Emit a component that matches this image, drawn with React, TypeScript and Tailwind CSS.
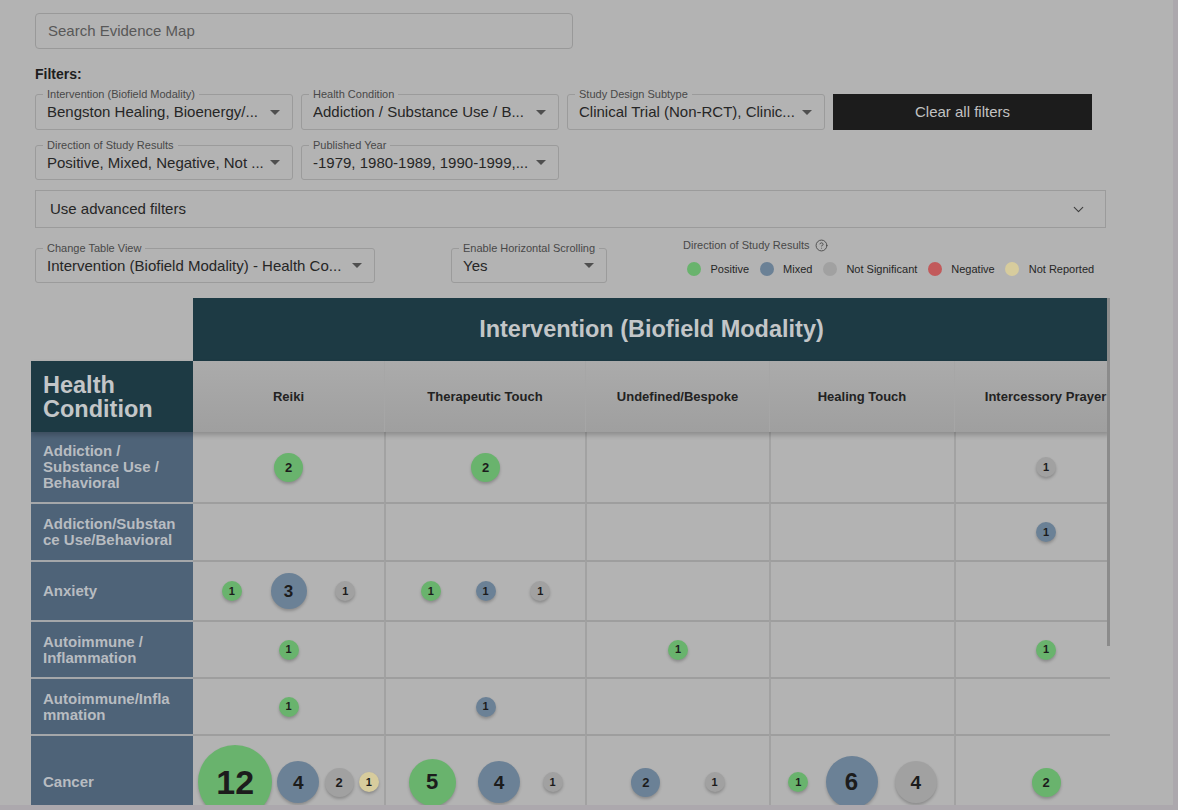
import React from "react";
import { ChevronDown, CircleHelp } from "lucide-react";

type Kind = "P" | "M" | "N" | "R";
const BUBBLE_BG: Record<Kind, string> = {
  P: "bg-[#69b36d]",
  M: "bg-[#6b8196]",
  N: "bg-[#a1a1a1]",
  R: "bg-[#d7cc9d]",
};

function Arrow() {
  return (
    <svg width="10" height="5" viewBox="0 0 10 5" className="shrink-0">
      <path d="M0 0 L10 0 L5 5 Z" fill="#4f4f4f" />
    </svg>
  );
}

function Field({ label, value, w, h }: { label: string; value: string; w: string; h: string }) {
  return (
    <div className={`relative ${w} ${h} border border-[#9b9b9b] rounded-[3px] flex items-center pl-[11px] pr-[12px] shrink-0`}>
      <span className="absolute -top-[7px] left-[7px] px-[4px] bg-[#b3b3b3] text-[11px] leading-[13px] text-[#484848] whitespace-nowrap">
        {label}
      </span>
      <span className="flex-1 whitespace-nowrap overflow-hidden text-[15px] leading-[18px] text-[#262626]">{value}</span>
      <Arrow />
    </div>
  );
}

function Bubble({ n, k }: { n: number; k: Kind }) {
  const d = Math.round(22 * Math.sqrt(n) - 2);
  const f = Math.max(11, Math.round(d * 0.46));
  return (
    <div
      className={`rounded-full flex items-center justify-center font-bold text-[#1c1c1c] shrink-0 shadow-[0_2px_3px_rgba(0,0,0,0.22)] ${BUBBLE_BG[k]}`}
      style={{ width: d, height: d, fontSize: f, lineHeight: 1 }}
    >
      {n}
    </div>
  );
}

const COLS = [
  { name: "Reiki", w: "w-[191px]" },
  { name: "Therapeutic Touch", w: "w-[201px]" },
  { name: "Undefined/Bespoke", w: "w-[184px]" },
  { name: "Healing Touch", w: "w-[185px]" },
  { name: "Intercessory Prayer", w: "w-[182px]" },
];

type Cell = [number, Kind][];
const ROWS: { label: string; h: string; first?: boolean; cells: Cell[] }[] = [
  {
    label: "Addiction / Substance Use / Behavioral",
    h: "h-[70px]",
    first: true,
    cells: [[[2, "P"]], [[2, "P"]], [], [], [[1, "N"]]],
  },
  {
    label: "Addiction/Substance Use/Behavioral",
    h: "h-[58px]",
    cells: [[], [], [], [], [[1, "M"]]],
  },
  {
    label: "Anxiety",
    h: "h-[60px]",
    cells: [
      [[1, "P"], [3, "M"], [1, "N"]],
      [[1, "P"], [1, "M"], [1, "N"]],
      [],
      [],
      [],
    ],
  },
  {
    label: "Autoimmune / Inflammation",
    h: "h-[57px]",
    cells: [[[1, "P"]], [], [[1, "P"]], [], [[1, "P"]]],
  },
  {
    label: "Autoimmune/Inflammation",
    h: "h-[57px]",
    cells: [[[1, "P"]], [[1, "M"]], [], [], []],
  },
  {
    label: "Cancer",
    h: "h-[94px]",
    cells: [
      [[12, "P"], [4, "M"], [2, "N"], [1, "R"]],
      [[5, "P"], [4, "M"], [1, "N"]],
      [[2, "M"], [1, "N"]],
      [[1, "P"], [6, "M"], [4, "N"]],
      [[2, "P"]],
    ],
  },
];

const LEGEND: { k: string; label: string }[] = [
  { k: "bg-[#69b36d]", label: "Positive" },
  { k: "bg-[#6b8196]", label: "Mixed" },
  { k: "bg-[#a1a1a1]", label: "Not Significant" },
  { k: "bg-[#c25a5b]", label: "Negative" },
  { k: "bg-[#d7cc9d]", label: "Not Reported" },
];

export default function App() {
  return (
    <div className="w-[1178px] h-[810px] overflow-hidden bg-[#aca8ad] font-['Liberation_Sans',Arial,sans-serif]">
      <div className="w-[1173px] h-[805px] overflow-hidden bg-[#b3b3b3] pt-[13px]">
        <div className="px-[35px]">
          {/* search */}
          <div className="w-[538px] h-[36px] rounded-[4px] border border-[#999999] flex items-center px-[12px] text-[15px] text-[#585858]">
            Search Evidence Map
          </div>

          <div className="mt-[17px] text-[14px] leading-[16px] font-bold text-[#1e1e1e]">Filters:</div>

          <div className="mt-[12px] flex gap-[8px]">
            <Field w="w-[258px]" h="h-[36px]" label="Intervention (Biofield Modality)" value="Bengston Healing, Bioenergy/..." />
            <Field w="w-[258px]" h="h-[36px]" label="Health Condition" value="Addiction / Substance Use / B..." />
            <Field w="w-[258px]" h="h-[36px]" label="Study Design Subtype" value="Clinical Trial (Non-RCT), Clinic..." />
            <button className="w-[259px] h-[36px] bg-[#1c1c1c] text-[#c2c2c2] text-[15px] flex items-center justify-center">
              Clear all filters
            </button>
          </div>

          <div className="mt-[15px] flex gap-[8px]">
            <Field w="w-[258px]" h="h-[35px]" label="Direction of Study Results" value="Positive, Mixed, Negative, Not ..." />
            <Field w="w-[258px]" h="h-[35px]" label="Published Year" value="-1979, 1980-1989, 1990-1999,..." />
          </div>

          <div className="mt-[10px] w-[1071px] h-[38px] border border-[#9b9b9b] flex items-center justify-between pl-[14px] pr-[18px]">
            <span className="text-[15px] text-[#262626]">Use advanced filters</span>
            <ChevronDown size={17} strokeWidth={1.6} color="#3e3e3e" />
          </div>

          <div className="mt-[20px] flex items-start gap-[76px]">
            <Field w="w-[340px]" h="h-[35px]" label="Change Table View" value="Intervention (Biofield Modality) - Health Co..." />
            <Field w="w-[156px]" h="h-[35px]" label="Enable Horizontal Scrolling" value="Yes" />
            <div className="-mt-[9px] flex flex-col">
              <div className="flex items-center gap-[5px] text-[11px] leading-[13px] text-[#484848]">
                <span>Direction of Study Results</span>
                <CircleHelp size={13} strokeWidth={1.6} color="#444" />
              </div>
              <div className="mt-[10px] ml-[4px] flex items-center gap-[10.5px]">
                {LEGEND.map((l) => (
                  <div key={l.label} className="flex items-center gap-[9.5px]">
                    <span className={`w-[14px] h-[14px] rounded-full ${l.k}`} />
                    <span className="text-[11px] leading-[13px] text-[#262626]">{l.label}</span>
                  </div>
                ))}
              </div>
            </div>
          </div>
        </div>

        {/* table */}
        <div className="mt-[15px] pl-[31px]">
          <div className="relative w-[1079px] overflow-hidden">
            <div className="flex h-[63px]">
              <div className="w-[162px] shrink-0" />
              <div className="flex-1 bg-[#1d3a44] flex items-center justify-center text-[23.5px] font-bold text-[#c3c6c8]">
                Intervention (Biofield Modality)
              </div>
            </div>
            <div className="relative z-10 flex h-[71px] shadow-[0_3px_5px_rgba(0,0,0,0.22)]">
              <div className="w-[162px] shrink-0 bg-[#1d3a44] flex items-center pl-[12px] text-[23.5px] leading-[24px] font-bold text-[#c3c6c8]">
                Health
                <br />
                Condition
              </div>
              {COLS.map((c, i) => (
                <div
                  key={c.name}
                  className={`${c.w} shrink-0 flex items-center justify-center whitespace-nowrap bg-gradient-to-b from-[#ababab] to-[#9f9f9f] text-[13px] font-bold text-[#222] ${i > 0 ? "border-l border-[#a6a6a6]" : ""}`}
                >
                  {c.name}
                </div>
              ))}
            </div>
            {ROWS.map((r) => (
              <div key={r.label} className={`flex ${r.h}`}>
                <div
                  className={`w-[162px] shrink-0 bg-[#4e6378] flex items-center px-[12px] text-[15px] leading-[16px] font-bold text-[#b8bcc1] [overflow-wrap:anywhere] ${r.first ? "" : "border-t-2 border-[#a4a7aa]"}`}
                >
                  <span className="min-w-0">{r.label}</span>
                </div>
                {COLS.map((c, i) => (
                  <div
                    key={c.name}
                    className={`${c.w} shrink-0 flex items-center justify-evenly ${r.first ? "" : "border-t-2 border-t-[#9e9e9e]"} ${i > 0 ? "border-l-2 border-l-[#a2a2a2]" : ""}`}
                  >
                    {r.cells[i].map(([n, k], j) => (
                      <Bubble key={j} n={n} k={k} />
                    ))}
                  </div>
                ))}
              </div>
            ))}
            <div className="absolute right-0 top-0 w-[3px] h-[348px] bg-[#8b8b8b] z-20" />
          </div>
        </div>
      </div>
    </div>
  );
}
